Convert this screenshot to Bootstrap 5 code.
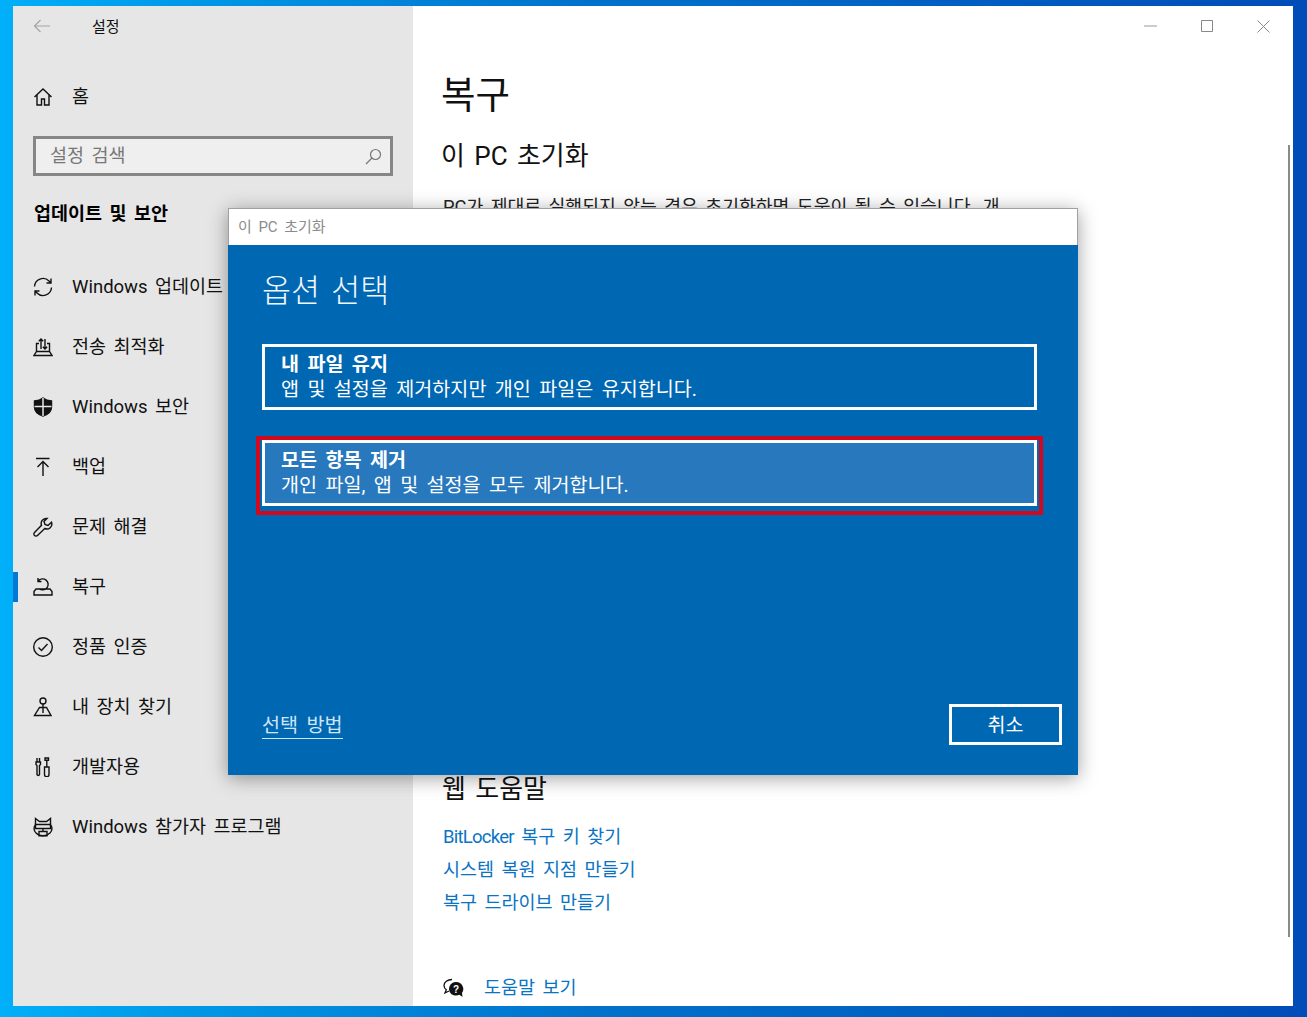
<!DOCTYPE html>
<html lang="ko">
<head>
<meta charset="utf-8">
<title>설정</title>
<link href="https://cdn.jsdelivr.net/npm/bootstrap@5.3.0/dist/css/bootstrap.min.css" rel="stylesheet">
<style>
html,body{height:100%}
body{margin:0;padding:6px 14px 11px 13px;overflow:hidden;font-family:Roboto,"Noto Sans CJK KR",sans-serif;word-spacing:.18em;color:#111;
background:linear-gradient(90deg,#00b0f8 0,#0098e8 14%,#0072cc 45%,#004cb8 100%)}
.win{height:1000px;width:1280px;background:#fff;position:relative}
.side{width:400px;background:#e6e6e6;flex:none;padding-left:20px}
.wintop{height:40px;font-size:15px}
.wintop span{margin-left:41px}
.row-home{height:60px;margin-top:21px;font-size:18.5px}
.nav-it span,.row-home span,.wintop span,.searchbox span{padding-top:2px}
.ic{width:20px;height:20px;flex:none;margin-right:19px;fill:none;stroke:#111;stroke-width:1.4}
.searchbox{width:360px;height:40px;border:3px solid #868686;background:#efefef;margin-top:9px;padding:0 8px 0 14px;font-size:18.5px;color:#777}
.sec{font-size:18.5px;font-weight:700;margin:24px 0 0 1px;line-height:28px;height:57px;color:#000}
.nav-it{height:60px;font-size:18.5px;position:relative}
.nav-it.on::before{content:"";position:absolute;left:-20px;top:15px;width:5px;height:30px;background:#0078d4}
.main{padding:0 0 0 29px;position:relative;min-width:0}
.ctl{height:40px;padding-right:23px;gap:44px}
.h-main{font-size:37.5px;font-weight:400;line-height:48px;margin:25px 0 0 -1px;color:#111}
.h-sub{font-size:26px;font-weight:400;line-height:34px;margin:20px 0 0 -1px;color:#111}
.para{font-size:18.3px;line-height:26px;margin:21px 0 0 1px;width:562px;height:578px;color:#222}
.lnk{display:block;font-size:18.5px;line-height:33px;color:#0a74c4;text-decoration:none;margin-left:1px}
.tight{letter-spacing:-.75px}
.h-web{margin:0 0 15px 0;color:#111}
.helpline{margin-top:52px;margin-left:1px}
.helpline svg{margin-right:20px}
.sbar{position:absolute;right:3px;top:139px;width:2px;height:792px;background:#8a8a8a}
.dlg{position:absolute;left:215px;top:202px;width:850px;height:567px;box-shadow:0 3px 18px rgba(0,0,0,.38)}
.dlg-t{height:37px;background:#fff;color:#8c8c8c;font-size:15px;padding-left:9px;border:1px solid #a0a0a0;border-bottom:0}
.dlg-b{background:#0067b3;height:530px;padding:25px 16px 0 34px;color:#fff;position:relative;word-spacing:.22em}
.dlg-h{font-size:31.5px;font-weight:300;line-height:44px;margin:0 0 30px;color:#f2f8fc}
.opt{width:775px;height:66px;border:3px solid #fff;padding:5px 0 0 16px;margin-bottom:30px;line-height:25px;font-size:19.6px;position:relative}
.opt b{display:block;font-weight:700}
.opt.sel{background:#2778bd}
.redmark{position:absolute;left:-9px;right:-9px;top:-7px;bottom:-12px;border:4px solid #d2091c;pointer-events:none}
.dlg-f{position:absolute;left:34px;right:16px;bottom:30px}
.how{font-size:19.6px;color:#cfe6f8;text-decoration:none;border-bottom:1px solid #cfe6f8;line-height:25px;margin-bottom:6px}
.cancel{width:113px;height:41px;border:3px solid #fff;border-radius:0;color:#fff;background:transparent;font-size:19.6px;padding:2px 0 0;line-height:30px}
</style>
</head>
<body>
<div class="win d-flex">
  <aside class="side d-flex flex-column">
    <div class="wintop d-flex align-items-center">
      <svg width="18" height="14" viewBox="0 0 18 14" fill="none" stroke="#a4a4a4" stroke-width="1.2"><path d="M1.5 7H17M7.5 1 1.5 7l6 6"/></svg>
      <span>설정</span>
    </div>
    <div class="row-home d-flex align-items-center">
      <svg class="ic" viewBox="0 0 20 20"><path d="M1.5 10 10 2l8.500 8M4 8v10h4.500v-6h3v6H16V8"/></svg><span>홈</span>
    </div>
    <div class="searchbox d-flex align-items-center justify-content-between">
      <span>설정 검색</span>
      <svg width="17" height="17" viewBox="0 0 17 17" fill="none" stroke="#777" stroke-width="1.2"><circle cx="10.500" cy="6.500" r="5"/><path d="M7 10 1 16"/></svg>
    </div>
    <div class="sec">업데이트 및 보안</div>
    <div class="nav-it d-flex align-items-center">
      <svg class="ic" viewBox="0 0 20 20"><path d="M1.500 9.500A8.500 8.500 0 0 1 16 4l2 2M18.500 10.500A8.500 8.500 0 0 1 4 16l-2-2M18 1.500V6h-4.500M2 18.500V14h4.500"/></svg><span>Windows 업데이트</span>
    </div>
    <div class="nav-it d-flex align-items-center">
      <svg class="ic" viewBox="0 0 20 20"><path d="M1 18.500h18l-2.500-4h-13zM3.500 14.500V6.500H6M16.500 14.500V6.500H14M8 12V2M5.800 4.200 8 2l2.200 2.200M12 2v10M9.800 9.800 12 12l2.200-2.200"/></svg><span>전송 최적화</span>
    </div>
    <div class="nav-it d-flex align-items-center">
      <svg class="ic" viewBox="0 0 20 20"><path fill="#111" d="M10 1c2.500 2 5 2.800 8.500 3v6c0 4.500-3.500 7.500-8.500 9-5-1.500-8.500-4.500-8.500-9V4C5 3.800 7.500 3 10 1z"/><path stroke="#e6e6e6" stroke-width="1.500" d="M10 1v18M1.500 9.500h17"/></svg><span>Windows 보안</span>
    </div>
    <div class="nav-it d-flex align-items-center">
      <svg class="ic" viewBox="0 0 20 20"><path d="M3 1.500h13.500M10 19V4.500M4.500 10 10 4.500l5.500 5.500"/></svg><span>백업</span>
    </div>
    <div class="nav-it d-flex align-items-center">
      <svg class="ic" viewBox="0 0 20 20"><path d="M13 1.500a5 5 0 0 0-4.500 6.800L1.500 15.500a2 2 0 0 0 3 3l7.200-7a5 5 0 0 0 6.800-6.300L15 8.500l-3-1-1-3 3-3z"/></svg><span>문제 해결</span>
    </div>
    <div class="nav-it on d-flex align-items-center">
      <svg class="ic" viewBox="0 0 20 20"><path d="M1 18h18v-3.500L17 12H3l-2 2.500zM5.300 4A5.500 5.500 0 1 1 6 11.500M5 1v3.500h3.500"/></svg><span>복구</span>
    </div>
    <div class="nav-it d-flex align-items-center">
      <svg class="ic" viewBox="0 0 20 20"><circle cx="10" cy="10" r="9.300"/><path d="m5.500 10.500 3 3 6-6.500"/></svg><span>정품 인증</span>
    </div>
    <div class="nav-it d-flex align-items-center">
      <svg class="ic" viewBox="0 0 20 20"><circle cx="10" cy="4" r="3"/><path d="M10 7v9M6.500 10.500h7L18 18.500H1.500z"/></svg><span>내 장치 찾기</span>
    </div>
    <div class="nav-it d-flex align-items-center">
      <svg class="ic" viewBox="0 0 20 20"><path d="M4 1v4M6.500 1v4M3 5h4.500v2.500l-1 1v9a1.300 1.300 0 0 1-2.500 0v-9l-1-1zM12 1h3.500v2.200H12zM13.800 3.200V10M11.500 10h4.500v7.500a2.200 2.200 0 0 1-4.500 0z"/></svg><span>개발자용</span>
    </div>
    <div class="nav-it d-flex align-items-center">
      <svg class="ic" viewBox="0 0 20 20"><path d="M2.500 1.500 6.500 4.500h7l4-3V8c2 1.500 2 6-.5 8-1.800 1.800-4 2.800-7 2.800S4.800 17.800 3 16C.5 14 .5 9.500 2.500 8z"/><path d="M2.500 7.500h15v4h-15zM6 14.500h8v4.300H6zM10 11.500v3"/></svg><span>Windows 참가자 프로그램</span>
    </div>
  </aside>
  <main class="main flex-grow-1">
    <div class="ctl d-flex align-items-center justify-content-end">
      <svg width="13" height="2" viewBox="0 0 13 2"><path d="M0 1h13" stroke="#999"/></svg>
      <svg width="12" height="12" viewBox="0 0 12 12"><path d="M.5.500h11v11H.5z" fill="none" stroke="#888"/></svg>
      <svg width="13" height="13" viewBox="0 0 13 13"><path d="m.5.500 12 12M12.500.500l-12 12" fill="none" stroke="#888"/></svg>
    </div>
    <h1 class="h-main">복구</h1>
    <h2 class="h-sub">이 PC 초기화</h2>
    <p class="para">PC가 제대로 실행되지 않는 경우 초기화하면 도움이 될 수 있습니다. 개인 파일을 유지할지 또는 제거할지 선택한 후 Windows를 다시 설치할 수 있습니다.</p>
    <h2 class="h-sub h-web">웹 도움말</h2>
    <a class="lnk" href="#"><span class="tight">BitLocker</span> 복구 키 찾기</a>
    <a class="lnk" href="#">시스템 복원 지점 만들기</a>
    <a class="lnk" href="#">복구 드라이브 만들기</a>
    <div class="helpline d-flex align-items-center">
      <svg width="21" height="21" viewBox="0 0 21 21"><path d="M9 1.500C4.500 1.500 1 4 1 7.500c0 1.800 1 3.300 2.300 4.300L2 15l4-2" fill="none" stroke="#111" stroke-width="1.300"/><path d="M13 4a7 7 0 0 0-4.500 12.300c2.500 1.500 6 1.500 8 .5l3 2.200-.5-4A7 7 0 0 0 13 4z" fill="#111"/><text x="13" y="15" font-size="10" font-weight="700" fill="#fff" text-anchor="middle" font-family="Liberation Sans">?</text></svg>
      <a class="lnk m-0" href="#">도움말 보기</a>
    </div>
    <div class="sbar"></div>
  </main>
  <section class="dlg">
    <div class="dlg-t d-flex align-items-center">이 PC 초기화</div>
    <div class="dlg-b">
      <div class="dlg-h">옵션 선택</div>
      <div class="opt"><b>내 파일 유지</b>앱 및 설정을 제거하지만 개인 파일은 유지합니다.</div>
      <div class="opt sel"><b>모든 항목 제거</b>개인 파일, 앱 및 설정을 모두 제거합니다.<span class="redmark"></span></div>
      <div class="dlg-f d-flex justify-content-between align-items-end">
        <a class="how" href="#">선택 방법</a>
        <button type="button" class="btn cancel">취소</button>
      </div>
    </div>
  </section>
</div>
</body>
</html>
